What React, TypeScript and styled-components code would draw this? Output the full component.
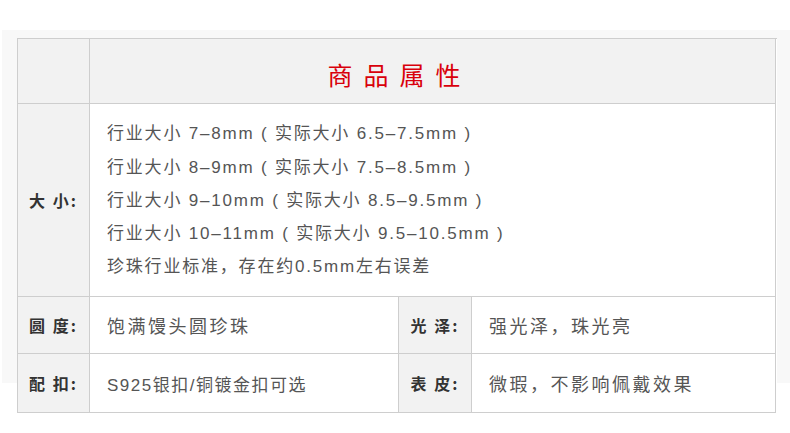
import { createGlobalStyle, styled } from 'styled-components';

const GlobalStyle = createGlobalStyle`
  body {
    margin: 0;
    background: #fff;
    font-family: "Liberation Sans", "Noto Sans CJK SC", sans-serif;
  }
`;

const sizes = [
  '行业大小 7–8mm ( 实际大小 6.5–7.5mm )',
  '行业大小 8–9mm ( 实际大小 7.5–8.5mm )',
  '行业大小 9–10mm ( 实际大小 8.5–9.5mm )',
  '行业大小 10–11mm ( 实际大小 9.5–10.5mm )',
  '珍珠行业标准，存在约0.5mm左右误差',
];

export default function App() {
  return (
    <>
      <GlobalStyle />
      <Page>
        <Panel>
          <Table>
            <HeadCell />
            <TitleCell $span={3}>商品属性</TitleCell>

            <Label $height={193}>大 小:</Label>
            <Value $span={3}>
              <Lines>
                {sizes.map((s) => (
                  <div key={s}>{s}</div>
                ))}
              </Lines>
            </Value>

            <Label $height={57}>圆 度:</Label>
            <Value $wide>饱满馒头圆珍珠</Value>
            <Label>光 泽:</Label>
            <Value $wide>强光泽，珠光亮</Value>

            <Label $height={59}>配 扣:</Label>
            <Value>S925银扣/铜镀金扣可选</Value>
            <Label>表 皮:</Label>
            <Value $wide>微瑕，不影响佩戴效果</Value>
          </Table>
        </Panel>
      </Page>
    </>
  );
}

const Page = styled.div`
  width: 790px;
  height: 433px;
  padding-top: 30px;
  box-sizing: border-box;
  overflow: hidden;
`;

const Panel = styled.div`
  margin-left: 2px;
  height: 353px;
  padding: 8px 0 0 15px;
  box-sizing: border-box;
  background: #f8f8f8;
`;

const Table = styled.div`
  display: grid;
  grid-template-columns: 72px 309px 73px 304px;
  width: 759px;
  border-top: 1px solid #cecece;
  border-left: 1px solid #cecece;
  background: #fff;
`;

const Cell = styled.div<{ $span?: number; $height?: number }>`
  grid-column: span ${({ $span }) => $span ?? 1};
  height: ${({ $height }) => ($height ? `${$height}px` : 'auto')};
  border-right: 1px solid #cecece;
  border-bottom: 1px solid #cecece;
  display: flex;
  align-items: center;
  box-sizing: border-box;
`;

const HeadCell = styled(Cell)`
  height: 65px;
  background: #f2f2f2;
`;

const TitleCell = styled(Cell)`
  height: 65px;
  background: #f2f2f2;
  justify-content: center;
  color: #d9000b;
  font-family: "Noto Sans CJK SC", sans-serif;
  font-size: 25px;
  letter-spacing: 11px;
  padding: 6px 77px 0 11px;
`;

const Label = styled(Cell)`
  background: #f2f2f2;
  justify-content: center;
  color: #333;
  font-family: "Noto Sans CJK SC", sans-serif;
  font-size: 16px;
  font-weight: bold;
  letter-spacing: 2px;
  white-space: pre;
`;

const Value = styled(Cell)<{ $wide?: boolean }>`
  padding-left: 17px;
  color: #555;
  font-size: ${({ $wide }) => ($wide ? '18px' : '17px')};
  letter-spacing: ${({ $wide }) => ($wide ? '2.5px' : '1.5px')};
  white-space: nowrap;
`;

const Lines = styled.div`
  line-height: 33.2px;
  padding-top: 1px;
  letter-spacing: 1.8px;
`;
